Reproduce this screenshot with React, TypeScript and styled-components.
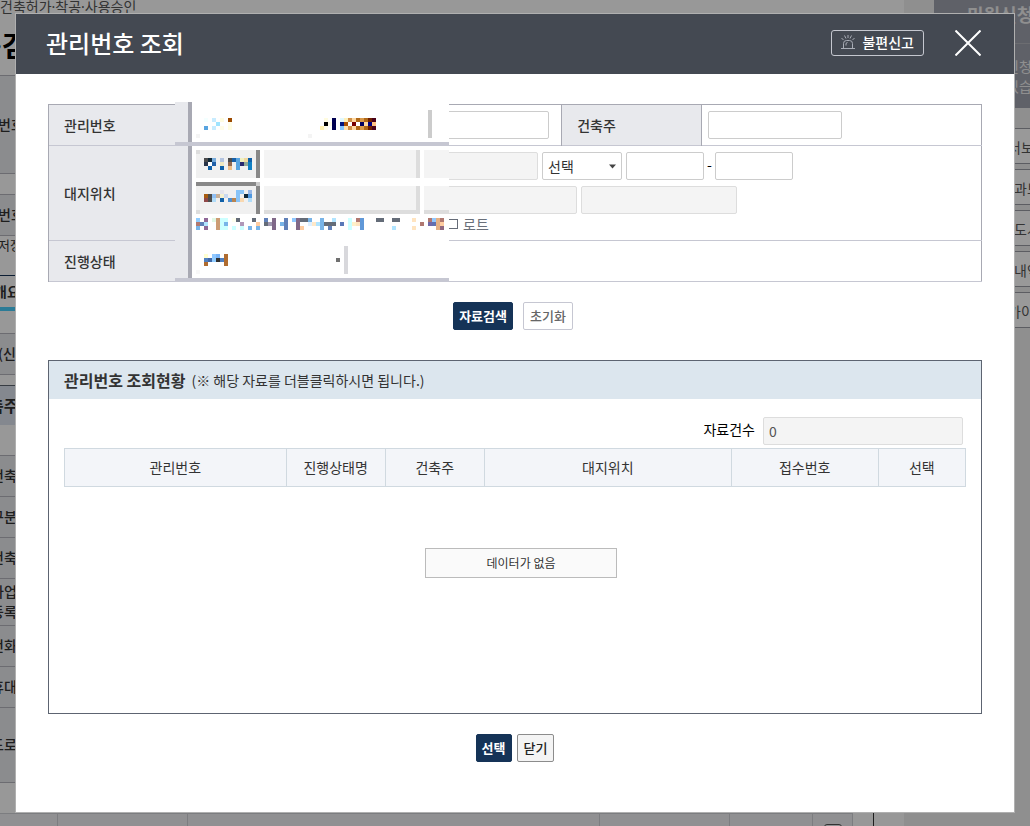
import React from "react";
import styled, { createGlobalStyle } from "styled-components";

const GlobalStyle = createGlobalStyle`
  * { box-sizing: border-box; }
  body {
    margin: 0;
    background: #fff;
    color: #333;
    font-family: "Noto Sans CJK KR", "Noto Sans", sans-serif;
    font-size: 14px;
    line-height: 20px;
  }
  button, input, select { font-family: inherit; margin: 0; }
`;

/* ---------- page behind the dialog ---------- */

const Screen = styled.div`
  position: relative;
  min-height: 100vh;
`;

const Page = styled.div`
  position: absolute;
  inset: 0;
  overflow: hidden;
  display: flex;
`;

const Main = styled.main`
  flex: 1;
  min-width: 0;
  background: #fdfdfd;
`;

const Breadcrumb = styled.div`
  height: 18px;
  line-height: 14px;
  font-family: "Noto Sans", "Noto Sans CJK KR", sans-serif;
  color: #555;
`;

const PageTitle = styled.h1`
  margin: 0 0 0 -6px;
  height: 57px;
  font-family: "Noto Sans", "Noto Sans CJK KR", sans-serif;
  font-size: 28px;
  line-height: 57px;
  color: #000;
`;

const Band = styled.div<{ $h: number; $tone?: string; $line?: string; $shift?: number; $size?: number; $weight?: number }>`
  height: ${(p) => p.$h}px;
  background: ${(p) => p.$tone ?? "transparent"};
  border-top: 1px solid ${(p) => p.$line ?? "#b4b5bd"};
  display: flex;
  align-items: center;
  padding: 0 0 2px 16px;
  margin-left: ${(p) => (p.$shift ?? 0) - 16}px;
  font-size: ${(p) => p.$size ?? 14}px;
  font-weight: ${(p) => p.$weight ?? 500};
  white-space: pre;
`;

const TabMark = styled.div`
  height: 4px;
  width: 60px;
  background: #49cefa;
`;

const FileRow = styled.div`
  display: grid;
  grid-template-columns: 58px 130px 412px 130px 83px 40px 1fr;
  height: 40px;
`;

const FileCell = styled.div`
  background: #f0f1f4;
  border-top: 1px solid #cfd0d6;
  border-right: 1px solid #cfd0d6;
  padding: 10px 11px;
`;

const FileEnd = styled.div`
  width: 21px;
  border-right: 1px solid #333;
`;

const PageCheck = styled.input`
  appearance: none;
  display: block;
  width: 18px;
  height: 18px;
  border: 1px solid #555;
  border-radius: 3px;
`;

const Side = styled.aside`
  width: 126px;
  padding-left: 30px;
  background: #eee;
  overflow: hidden;
`;

const SideHead = styled.div`
  height: 44px;
  padding: 4px 0 0 33px;
  background: #9ea2ae;
  border-bottom: 1px solid #b5b6bc;
  color: #eee;
  font-size: 18px;
  font-weight: 700;
  white-space: nowrap;
`;

const SideNote = styled.p`
  margin: 0 0 20px;
  height: 64px;
  padding: 12px 0 0 72px;
  background: #9ea2ae;
  color: #eee;
  white-space: nowrap;
`;

const SideLink = styled.a<{ $indent: number }>`
  display: block;
  height: 36px;
  margin-bottom: 5px;
  padding: 8px 0 0 ${(p) => p.$indent}px;
  border: 1px solid #9a9ba3;
  border-right: 0;
  background: #fff;
  color: #555;
  text-decoration: none;
  white-space: nowrap;
`;

const Backdrop = styled.div`
  position: absolute;
  inset: 0;
  background: rgba(0, 0, 0, 0.4);
`;

/* ---------- dialog ---------- */

const Dialog = styled.section`
  position: relative;
  margin: 0 15px;
  top: 13px;
  border: 1px solid #b0b0b0;
  background: #fff;
`;

const DialogHead = styled.header`
  display: flex;
  align-items: center;
  height: 60px;
  padding: 0 33px 2px 30px;
  background: #444952;
  color: #fff;
`;

const DialogTitle = styled.h2`
  margin: 0;
  flex: 1;
  font-size: 24px;
  line-height: 32px;
  font-weight: 500;
`;

const ReportButton = styled.button`
  display: flex;
  align-items: center;
  gap: 7px;
  height: 26px;
  padding: 0 9px 2px;
  border: 1px solid #c5c7cf;
  border-radius: 3px;
  background: transparent;
  color: #fff;
  font-size: 14px;
  line-height: 20px;
  font-weight: 500;
  white-space: nowrap;
`;

const CloseButton = styled.button`
  margin-left: 31px;
  padding: 0;
  border: 0;
  background: transparent;
  svg { display: block; }
`;

const DialogBody = styled.div`
  padding: 30px 32px 50px;
`;

const SearchArea = styled.div`
  position: relative;
`;

const SearchTable = styled.table`
  width: 100%;
  table-layout: fixed;
  border-collapse: collapse;
  border: 1px solid #a8a9b3;
  border-bottom-color: #c6c7d2;
`;

const SearchRow = styled.tr<{ $h: number }>`
  height: ${(p) => p.$h}px;
  border-bottom: 1px solid #c6c7d2;
`;

const HeadCell = styled.th`
  padding: 0 15px;
  border-left: 1px solid #a8a9b3;
  border-right: 1px solid #a8a9b3;
  background: #e8e9ed;
  text-align: left;
  font-weight: 500;
`;

const FieldCell = styled.td<{ $pad?: number }>`
  padding: 0 ${(p) => p.$pad ?? 7}px;
`;

const Line = styled.div<{ $top?: number }>`
  display: flex;
  align-items: center;
  gap: 4px;
  margin-top: ${(p) => p.$top ?? 0}px;
`;

const Field = styled.input<{ $w: number }>`
  width: ${(p) => p.$w}px;
  height: 28px;
  padding: 0 5px;
  border: 1px solid #ccc;
  border-radius: 2px;
  background: #fff;
  font-size: 14px;
  color: #555;
  &:read-only {
    border-color: #ddd;
    background: #f4f4f4;
  }
`;

const Picker = styled.span`
  position: relative;
  display: flex;
  svg { position: absolute; right: 5px; top: 12px; pointer-events: none; }
`;

const Select = styled.select`
  appearance: none;
  width: 80px;
  height: 28px;
  padding: 0 5px 1px;
  border: 1px solid #ccc;
  border-radius: 2px;
  background: #fff;
  color: #333;
  font-size: 14px;
`;

const Dash = styled.span`
  width: 3px;
  color: #000;
  line-height: 20px;
  display: flex;
  justify-content: center;
  padding-bottom: 4px;
`;

const LotLabel = styled.label`
  display: flex;
  align-items: center;
  gap: 5px;
  margin-left: 252px;
  height: 20px;
  color: #6a707a;
`;

const LotCheck = styled.input`
  appearance: none;
  width: 10px;
  height: 10px;
  border: 1px solid #666c78;
`;

const Censored = styled.svg`
  position: absolute;
  left: 127px;
  top: -2px;
  pointer-events: none;
`;

const Actions = styled.div<{ $gap: number; $inset?: number }>`
  display: flex;
  justify-content: center;
  gap: ${(p) => p.$gap}px;
  margin-top: 20px;
  padding-right: ${(p) => p.$inset ?? 0}px;
`;

const Button = styled.button<{ $kind: "solid" | "line" | "grey" }>`
  height: 28px;
  padding: 0 ${(p) => (p.$kind === "solid" ? 5 : 6)}px 1px;
  border: 1px solid ${(p) => ({ solid: "#153357", line: "#c6c7d2", grey: "#8c8c8c" })[p.$kind]};
  border-radius: 2px;
  background: ${(p) => ({ solid: "#153357", line: "#fff", grey: "#f4f4f4" })[p.$kind]};
  color: ${(p) => ({ solid: "#fff", line: "#666", grey: "#222" })[p.$kind]};
  font-size: 13px;
  line-height: 20px;
  font-weight: ${(p) => (p.$kind === "solid" ? 700 : 500)};
`;

const Results = styled.section`
  margin-top: 30px;
  height: 354px;
  border: 1px solid #5d6471;
`;

const ResultsHead = styled.header`
  display: flex;
  align-items: center;
  gap: 6px;
  height: 38px;
  padding: 0 15px;
  background: #dce6ee;
`;

const ResultsTitle = styled.h3`
  margin: 0;
  font-size: 16px;
  line-height: 24px;
`;

const CountRow = styled.div`
  display: flex;
  justify-content: flex-end;
  align-items: center;
  gap: 8px;
  margin: 18px 18px 3px;
  color: #000;
  label { padding-bottom: 4px; }
`;

const ResultTable = styled.table`
  width: calc(100% - 30px);
  margin: 0 15px;
  table-layout: fixed;
  border-collapse: collapse;
  th {
    height: 38px;
    padding: 0 0 1px;
    border: 1px solid #d0d9e0;
    background: #f3f5f9;
    font-weight: 400;
  }
`;

const Empty = styled.p`
  width: 192px;
  height: 30px;
  margin: 61px auto 0;
  position: relative;
  left: 6px;
  border: 1px solid #bbb;
  background: #fafafa;
  text-align: center;
  font-size: 12px;
  line-height: 28px;
`;

/* Colour blocks that hide the private values: [y, then x/colour pairs]. */
const blocks: [number, string][] = [
  [118, "204 f4ffff 212 c8ecff 220 fffce0 228 9c4a00 324 fffce0 332 000050 340 e0f8ff 344 fff0b8 348 d09048 352 ffd8a0 356 b06818 360 d89848 364 b06818 368 702000 372 480018"],
  [122, "216 a0e4ff 228 fffce8 324 000000 328 fffce8 332 000050 340 001880 344 a85000 352 780000 360 000060 364 ffd8a0 368 000080 372 ffc080"],
  [126, "204 58a4e0 212 c8ecff 220 fffce8 228 fffce0 320 fff0b0 324 fffce8 332 000050 340 80c4ff 344 ffe0a8 348 d09048 352 ffd8a0 356 b06818 360 d89848 364 b06818 368 702000 372 480018"],
  [134, "196 f4f4f4 308 f4f4f4"],
  [158, "204 4c4c4c 208 102838 212 78acdc 220 b4c4e0 228 4c4c4c 232 1860a8 236 58a4e0 240 f0f0c0 244 f0d8a0 248 1060a8"],
  [162, "204 283448 208 ffffff 212 2060a8 220 f0e8c0 228 906850 236 58a4e0 240 282870 244 90a898 248 1080c4"],
  [166, "208 1060a8 220 1060a8 228 f0c088 236 58a4e0 248 1080c4"],
  [190, "220 e4e4ec 236 88c4f8 240 88c4f8 248 98b8e8"],
  [194, "204 a85c10 208 4c4c4c 212 90c0f4 216 c8b098 220 f4f0d0 224 c8d8f0 236 88c4f8 244 102838 248 5098e0"],
  [198, "204 904848 208 4c4c4c 212 b0dcf8 220 1060a8 228 5090d0 232 b88450 236 88c4f8 240 f8d8b0 248 b0dcf8"],
  [218, "196 90ccff 204 906898 212 e0f8e4 216 cc9c74 220 ccffff 224 ccffff 232 fffff0 236 646c78 252 646c78 264 6080b8 272 806888 284 6080b8 292 90c8ff 296 806888 300 646c78 304 646c78 308 78b4e8 320 78b4e8 332 b0e4ff 348 ccffff 356 b07870 360 6098d8 376 646c78 380 646c78 392 646c78 396 646c78 412 ffe4c0 428 b07870 432 90c8ff 436 e4b084 440 b07870"],
  [222, "196 b07870 200 6080b8 204 b0e4ff 216 cc9c74 220 ccffff 224 78b4e8 240 b098b8 256 ffcca0 264 646c78 268 a098b0 272 806888 280 78b4e8 284 6080b8 296 806888 308 e0f0ff 312 ffe8c8 316 b0e4ff 320 78b4e8 324 646c78 328 646c78 332 646c78 340 5878b8 348 ccffff 352 fff0c8 356 ffe4c0 360 6098d8 420 b07870 428 7068a8 432 6070b0 436 e4b084 440 ffcca0"],
  [226, "196 78b4e8 204 906898 216 cc9c74 220 ccffff 224 ccffff 232 ccffff 240 ccffff 248 78b4e8 256 78b4e8 272 806888 284 6080b8 296 806888 300 ffcca0 320 78b4e8 328 6080b8 348 ccffff 360 6098d8 392 b0e4ff 412 ffe4c0 436 e4b084 440 906880"],
  [254, "204 ffffd0 212 90c8ff 216 78b4f8 224 b06c30"],
  [258, "204 5080c0 208 4068a8 212 90ccff 216 303030 220 5080c0 224 b06c30 336 707070"],
  [262, "204 b06c30 224 b06c30"],
  [270, "196 f8f8f8"],
];

/* Larger flat areas under the blocks: x, y, width, height, colour. */
const areas: [number, number, number, number, string][] = [
  [175, 102, 274, 180, "#fff"],
  [175, 102, 13, 176, "#e8e9ed"],
  [188, 102, 4, 176, "#a8a9b3"],
  [175, 142, 274, 4, "#c6c7d2"],
  [175, 278, 274, 4, "#c6c7d2"],
  [428, 110, 4, 28, "#ccc"],
  [196, 150, 60, 28, "#f0f0f0"],
  [196, 150, 4, 4, "#ddd"],
  [256, 150, 4, 28, "#888"],
  [264, 150, 152, 28, "#f4f4f4"],
  [416, 150, 4, 28, "#ddd"],
  [424, 150, 25, 28, "#f4f4f4"],
  [196, 182, 60, 4, "#888"],
  [256, 182, 4, 4, "#ccc"],
  [196, 186, 60, 28, "#f0f0f0"],
  [196, 210, 4, 4, "#ddd"],
  [256, 186, 4, 28, "#888"],
  [264, 186, 152, 24, "#f4f4f4"],
  [416, 186, 4, 24, "#ddd"],
  [264, 210, 156, 4, "#ddd"],
  [424, 186, 25, 24, "#f4f4f4"],
  [424, 210, 25, 4, "#ddd"],
  [344, 246, 4, 28, "#d8d8dc"],
];

function CensorPatch() {
  return (
    <Censored width="274" height="180" viewBox="175 102 274 180" shapeRendering="crispEdges" aria-hidden="true">
      {areas.map(([x, y, w, h, c], i) => (
        <rect key={i} x={x} y={y} width={w} height={h} fill={c} />
      ))}
      {blocks.flatMap(([y, row]) => {
        const parts = row.split(" ");
        return parts
          .filter((_, i) => i % 2 === 0)
          .map((x, i) => <rect key={`${y}-${x}`} x={x} y={y} width="4" height="4" fill={`#${parts[i * 2 + 1]}`} />);
      })}
    </Censored>
  );
}

const Siren = () => (
  <svg width="14" height="15" viewBox="0 0 14 15" fill="none" stroke="#a9adb6" strokeWidth="1" aria-hidden="true">
    <path d="M0 13.500h14M2.500 13V8.500a3 3 0 0 1 3-3h3a3 3 0 0 1 3 3V13M5 10.500V9a1.500 1.500 0 0 1 1.500-1.500M7 0v3M3.500 0.500l1.500 3M10.500 0.500L9 3.500M0.500 3l2 2M13.500 3l-2 2" />
  </svg>
);

const CELL = "#e8e9ed";

export default function App() {
  return (
    <>
      <GlobalStyle />
      <Screen>
        <Page aria-hidden="true">
          <Main>
            <Breadcrumb>건축허가·착공·사용승인</Breadcrumb>
            <PageTitle>·검</PageTitle>
            <Band $h={98} $tone={CELL} $shift={-2}>번호</Band>
            <Band $h={21} />
            <Band $h={41} $tone={CELL} $shift={-2}>번호</Band>
            <Band $h={20} $shift={-2} $size={13} $weight={400}>저장</Band>
            <Band $h={20} $line="transparent" />
            <Band $h={32} $line="#153357" $shift={-6} $weight={700}>개요</Band>
            <TabMark />
            <Band $h={22} $line="transparent" />
            <Band $h={41} $tone={CELL} $shift={-2}>(신고</Band>
            <Band $h={11} />
            <Band $h={40} $line="#5d6471" $tone="#dce3ee" $shift={-11} $size={16} $weight={700}>축주</Band>
            <Band $h={30} $line="transparent" />
            <Band $h={41} $tone={CELL} $shift={-9}>건축</Band>
            <Band $h={41} $tone={CELL} $shift={-9}>구분</Band>
            <Band $h={41} $tone={CELL} $shift={-9}>건축</Band>
            <Band $h={47} $tone={CELL} $shift={-9}>{"사업\n등록"}</Band>
            <Band $h={41} $tone={CELL} $shift={-9}>전화</Band>
            <Band $h={41} $tone={CELL} $shift={-9}>휴대</Band>
            <Band $h={75} $tone={CELL} $shift={-9}>도로</Band>
            <Band $h={31} />
            <FileRow>
              <FileCell />
              <FileCell />
              <FileCell />
              <FileCell />
              <FileCell />
              <FileCell><PageCheck type="checkbox" aria-label="선택" tabIndex={-1} /></FileCell>
              <FileEnd />
            </FileRow>
          </Main>
          <Side>
            <SideHead>민원신청</SideHead>
            <SideNote>신청<br />있습</SideNote>
            <SideLink href="#" $indent={73}>서보</SideLink>
            <SideLink href="#" $indent={79}>과보</SideLink>
            <SideLink href="#" $indent={79}>도시</SideLink>
            <SideLink href="#" $indent={79}>내역</SideLink>
            <SideLink href="#" $indent={73}>가이</SideLink>
          </Side>
        </Page>
        <Backdrop />

        <Dialog role="dialog" aria-labelledby="dialog-title">
          <DialogHead>
            <DialogTitle id="dialog-title">관리번호 조회</DialogTitle>
            <ReportButton type="button"><Siren />불편신고</ReportButton>
            <CloseButton type="button" aria-label="닫기">
              <svg width="26" height="26" viewBox="0 0 26 26" stroke="#fff" strokeWidth="2">
                <path d="M0.500 0.500L25.500 25.500M25.500 0.500L0.500 25.500" />
              </svg>
            </CloseButton>
          </DialogHead>

          <DialogBody>
            <SearchArea>
              <SearchTable>
                <colgroup>
                  <col style={{ width: 140 }} />
                  <col style={{ width: "40%" }} />
                  <col style={{ width: 140 }} />
                  <col />
                </colgroup>
                <tbody>
                  <SearchRow $h={41}>
                    <HeadCell scope="row">관리번호</HeadCell>
                    <FieldCell>
                      <Line>
                        <Field $w={108} aria-label="관리번호 기관" />
                        <Field $w={124} aria-label="관리번호 구분" />
                        <Field $w={113} aria-label="관리번호 일련번호" />
                      </Line>
                    </FieldCell>
                    <HeadCell scope="row"><label htmlFor="owner">건축주</label></HeadCell>
                    <FieldCell $pad={6}><Line><Field $w={134} id="owner" /></Line></FieldCell>
                  </SearchRow>
                  <SearchRow $h={95}>
                    <HeadCell scope="row">대지위치</HeadCell>
                    <FieldCell colSpan={3}>
                      <Line>
                        <Field $w={64} readOnly aria-label="시도" />
                        <Field $w={156} readOnly aria-label="시군구" />
                        <Field $w={114} readOnly aria-label="읍면동" />
                        <Picker>
                          <Select aria-label="대지구분"><option>선택</option></Select>
                          <svg width="9" height="5" viewBox="0 0 9 5"><path d="M1 0.500h7L4.500 4.500z" fill="#444" /></svg>
                        </Picker>
                        <Field $w={78} aria-label="본번" />
                        <Dash>-</Dash>
                        <Field $w={78} aria-label="부번" />
                      </Line>
                      <Line $top={6}>
                        <Field $w={64} readOnly aria-label="도로 시도" />
                        <Field $w={156} readOnly aria-label="도로 시군구" />
                        <Field $w={153} readOnly aria-label="도로명" />
                        <Field $w={156} readOnly aria-label="건물번호" />
                      </Line>
                      <Line>
                        <LotLabel><LotCheck type="checkbox" />로트</LotLabel>
                      </Line>
                    </FieldCell>
                  </SearchRow>
                  <SearchRow $h={41}>
                    <HeadCell scope="row">진행상태</HeadCell>
                    <FieldCell colSpan={3} />
                  </SearchRow>
                </tbody>
              </SearchTable>
              <CensorPatch />
            </SearchArea>

            <Actions $gap={10} $inset={4}>
              <Button type="button" $kind="solid">자료검색</Button>
              <Button type="button" $kind="line">초기화</Button>
            </Actions>

            <Results>
              <ResultsHead>
                <ResultsTitle>관리번호 조회현황</ResultsTitle>
                <span>(※ 해당 자료를 더블클릭하시면 됩니다.)</span>
              </ResultsHead>
              <CountRow>
                <label htmlFor="count">자료건수</label>
                <Field $w={200} id="count" readOnly value="0" />
              </CountRow>
              <ResultTable>
                <colgroup>
                  <col style={{ width: "24.6%" }} />
                  <col style={{ width: "11%" }} />
                  <col style={{ width: "11%" }} />
                  <col style={{ width: "27.4%" }} />
                  <col style={{ width: "16.3%" }} />
                  <col />
                </colgroup>
                <thead>
                  <tr>
                    <th scope="col">관리번호</th>
                    <th scope="col">진행상태명</th>
                    <th scope="col">건축주</th>
                    <th scope="col">대지위치</th>
                    <th scope="col">접수번호</th>
                    <th scope="col">선택</th>
                  </tr>
                </thead>
              </ResultTable>
              <Empty>데이터가 없음</Empty>
            </Results>

            <Actions $gap={5}>
              <Button type="button" $kind="solid">선택</Button>
              <Button type="button" $kind="grey">닫기</Button>
            </Actions>
          </DialogBody>
        </Dialog>
      </Screen>
    </>
  );
}
